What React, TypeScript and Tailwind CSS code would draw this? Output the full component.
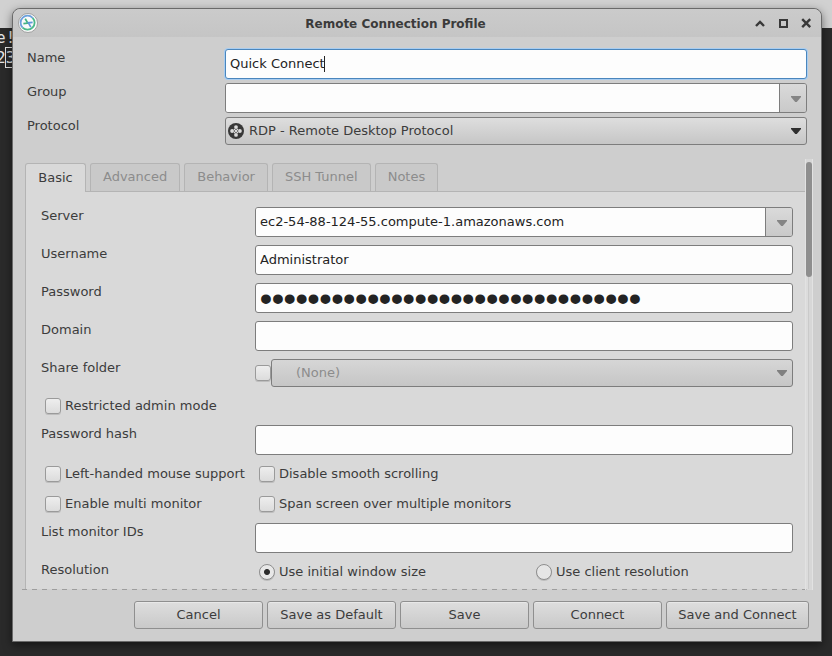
import { useId, useState, type ReactNode } from "react";

function Triangle({ className }: { className: string }) {
  return (
    <svg viewBox="0 0 10 6" className={`pointer-events-none h-1.5 w-2.5 ${className}`} fill="currentColor" aria-hidden="true">
      <path d="M0 0h10v1L5.8 6H4.2L0 1z" />
    </svg>
  );
}

function AppIcon() {
  return (
    <svg viewBox="0 0 20 20" className="size-5" fill="none" aria-hidden="true">
      <circle cx="10" cy="10" r="9.5" fill="#fafafa" stroke="#909090" strokeWidth="0.8" />
      <path d="M4.6 14.6A7 7 0 0 1 14.6 4.8" stroke="#6ba0dc" strokeWidth="1.8" />
      <path d="M14.6 4.8A7 7 0 1 1 4.6 14.6" stroke="#4bb98a" strokeWidth="1.8" />
      <path d="M7.2 5.8l2.6 4.2-4.4.6" stroke="#43b383" strokeWidth="1.7" />
      <path d="M14.6 9.4l-4.2.4 2.4 4.4" stroke="#5f97d8" strokeWidth="1.7" />
    </svg>
  );
}

function RdpIcon() {
  return (
    <svg viewBox="0 0 16 16" className="pointer-events-none absolute left-[3px] size-4" aria-hidden="true">
      <circle cx="8" cy="8" r="8" fill="#383838" />
      <g fill="#dcdcdc">
        <circle cx="8" cy="4.1" r="1.9" />
        <circle cx="8" cy="11.9" r="1.9" />
        <circle cx="4.1" cy="8" r="1.9" />
        <circle cx="11.9" cy="8" r="1.9" />
      </g>
      <path d="M6 6l4 4M10 6l-4 4" stroke="#dcdcdc" strokeWidth="1.1" />
    </svg>
  );
}

const box = "rounded-[3px] border border-[#7d7d7d]";
const entry = "h-[30px] w-full min-w-0 bg-[#fdfdfd] pl-1 pb-0.5 text-[#232323] outline-none";

function Field({ label, children }: { label: string; children: (id: string) => ReactNode }) {
  const id = useId();
  return (
    <>
      <label htmlFor={id} className="self-start leading-[18px]">{label}</label>
      {children(id)}
    </>
  );
}

function TextField({ label, value = "" }: { label: string; value?: string }) {
  return <Field label={label}>{(id) => <input id={id} type="text" defaultValue={value} className={`${entry} ${box}`} />}</Field>;
}

function ComboEntry({ label, value = "" }: { label: string; value?: string }) {
  return (
    <Field label={label}>
      {(id) => (
        <div className={`flex h-[30px] overflow-hidden ${box}`}>
          <input id={id} type="text" defaultValue={value} className="min-w-0 flex-1 bg-[#fdfdfd] pl-1 text-[#232323] outline-none" />
          <button type="button" aria-label={`${label} history`} className="flex w-[27px] items-center justify-end border-l border-[#7d7d7d] bg-linear-to-b from-[#dadada] to-[#c9c9c9] pt-0.5 pr-[5px]">
            <Triangle className="text-[#858585]" />
          </button>
        </div>
      )}
    </Field>
  );
}

function Tick({ label }: { label?: string }) {
  return (
    <input
      type="checkbox"
      aria-label={label}
      className="size-4 shrink-0 appearance-none rounded-[3px] border border-[#9a9a9a] bg-linear-to-b from-[#eeeeee] to-[#dcdcdc] shadow-[0_1px_0_#bdbdbd]"
    />
  );
}

function CheckItem({ label }: { label: string }) {
  return (
    <label className="flex h-[22px] items-center gap-1 pl-1 whitespace-nowrap">
      <Tick />
      <span className="leading-4">{label}</span>
    </label>
  );
}

function RadioItem({ label, checked }: { label: string; checked?: boolean }) {
  return (
    <label className="flex h-[22px] items-center gap-1 pl-1 whitespace-nowrap">
      <input
        type="radio"
        name="resolution"
        defaultChecked={checked}
        className="size-4 shrink-0 appearance-none rounded-full border border-[#8e8e8e] bg-[#e6e6e6] shadow-[0_1px_0_#bdbdbd] checked:bg-[radial-gradient(circle,#2d2d2d_2.5px,#e8e8e8_3.5px)]"
      />
      <span className="leading-4">{label}</span>
    </label>
  );
}

const tabs = ["Basic", "Advanced", "Behavior", "SSH Tunnel", "Notes"];

export default function App() {
  const [tab, setTab] = useState("Basic");
  const nameId = useId();
  return (
    <div className="relative min-h-screen overflow-hidden bg-[#2a2a2a] px-3 pt-2 pr-2.5 pb-3.5 font-['DejaVu_Sans',sans-serif] text-[13px] text-[#3c3c3c]">
      <div className="absolute inset-x-0 top-0 h-7 bg-[#d1d1d1]" />
      <pre aria-hidden="true" className="absolute top-7 -left-1 font-['DejaVu_Sans_Mono',monospace] text-[16px] leading-5 text-[#e4e4e4]">
        {"e!\n2"}
        <span className="outline outline-[#e4e4e4]">3</span>
      </pre>

      <main className="relative rounded-t-lg border border-[#6a6a6a] bg-[#cecece] shadow-[0_3px_10px_#00000080]">
        <header className="flex h-7 items-center rounded-t-lg bg-linear-to-b from-[#cbcbcb] to-[#c5c5c5] px-[5px]">
          <AppIcon />
          <h1 className="flex-1 pt-px text-center text-[12px] leading-7 font-bold text-[#3b3b3b]">Remote Connection Profile</h1>
          <div className="flex justify-end gap-[9px] pr-[3px] text-[#383838]">
            <button type="button" aria-label="Roll up">
              <svg viewBox="0 0 14 14" className="size-3.5" fill="none" stroke="currentColor" strokeWidth="2.4"><path d="M3 10L7 6l4 4" /></svg>
            </button>
            <button type="button" aria-label="Maximize">
              <svg viewBox="0 0 14 14" className="size-3.5" fill="none" stroke="currentColor" strokeWidth="2"><path d="M4 4h7v7H4z" /></svg>
            </button>
            <button type="button" aria-label="Close">
              <svg viewBox="0 0 14 14" className="size-3.5" fill="none" stroke="currentColor" strokeWidth="2.4"><path d="M3.2 3.2l8 8M11.2 3.2l-8 8" /></svg>
            </button>
          </div>
        </header>

        <section className="grid grid-cols-[198px_1fr] gap-y-1 px-3.5 pt-3">
          <label htmlFor={nameId} className="leading-[18px]">Name</label>
          <div className="relative">
            <input id={nameId} type="text" defaultValue="Quick Connect" className={`${entry} block rounded-[3px] border border-[#4a86bd] caret-transparent shadow-[0_0_0_1px_#a9cdf0]`} />
            <span className="absolute top-[7px] left-[99px] h-4 w-px bg-[#232323]" />
          </div>
          <ComboEntry label="Group" />
          <Field label="Protocol">
            {(id) => (
              <div className="relative flex items-center">
                <select id={id} className={`h-7 w-full appearance-none bg-linear-to-b from-[#dedede] to-[#c6c6c6] pl-[23px] text-[#3c3c3c] ${box}`}>
                  <option>RDP - Remote Desktop Protocol</option>
                </select>
                <RdpIcon />
                <Triangle className="absolute right-1.5 text-[#2f2f2f]" />
              </div>
            )}
          </Field>
        </section>

        <section className="relative mt-3.5 ml-[9px] mr-2 pt-1 pr-1 pl-[3px]">
          <div role="tablist" className="flex gap-1">
            {tabs.map((t) => (
              <button
                key={t}
                type="button"
                role="tab"
                aria-selected={t === tab}
                onClick={() => setTab(t)}
                className={
                  t === tab
                    ? "relative z-10 -mb-px h-[29px] min-w-[61px] rounded-t-[3px] border border-b-0 border-[#b4b4b4] bg-[#d9d9d9] px-3 whitespace-nowrap"
                    : "h-7 rounded-t-[3px] border border-b-0 border-[#b4b4b4] bg-[#c9c9c9] px-3 pb-0.5 whitespace-nowrap text-[#8c8c8c]"
                }
              >
                {t}
              </button>
            ))}
          </div>
          <div role="tabpanel" className="grid grid-cols-[214px_1fr] gap-y-2 border border-b-0 border-[#b4b4b4] bg-[#d9d9d9] px-[15px] pt-[15px] pb-1.5">
            <ComboEntry label="Server" value="ec2-54-88-124-55.compute-1.amazonaws.com" />
            <TextField label="Username" value="Administrator" />
            <Field label="Password">
              {(id) => (
                <input
                  id={id}
                  type="password"
                  defaultValue="correct-horse-battery-staple-042"
                  className={`h-[30px] w-full bg-[#fdfdfd] pl-1 font-['Liberation_Sans',sans-serif] text-[34px] leading-7 font-bold text-[#232323] outline-none ${box}`}
                />
              )}
            </Field>
            <TextField label="Domain" />
            <Field label="Share folder">
              {(id) => (
                <div className="flex items-center">
                  <Tick label="Enable share folder" />
                  <div className="relative flex flex-1 items-center">
                    <select id={id} disabled className={`h-7 w-full appearance-none bg-linear-to-b from-[#d6d6d6] to-[#c6c6c6] pl-6 text-[#8c8c8c] opacity-100 ${box}`}>
                      <option>(None)</option>
                    </select>
                    <Triangle className="absolute right-1.5 text-[#808080]" />
                  </div>
                </div>
              )}
            </Field>
            <div className="col-span-2"><CheckItem label="Restricted admin mode" /></div>
            <TextField label="Password hash" />
            <CheckItem label="Left-handed mouse support" />
            <CheckItem label="Disable smooth scrolling" />
            <CheckItem label="Enable multi monitor" />
            <CheckItem label="Span screen over multiple monitors" />
            <TextField label="List monitor IDs" />
            <span className="leading-[18px]">Resolution</span>
            <div role="radiogroup" aria-label="Resolution" className="grid grid-cols-2 gap-x-4">
              <RadioItem label="Use initial window size" checked />
              <RadioItem label="Use client resolution" />
            </div>
          </div>
          <div className="-mr-1 -ml-[3px] h-px bg-[repeating-linear-gradient(90deg,#9e9e9e_0_5px,#d0d0d0_5px_10px)]" />
          <div className="absolute inset-y-0 right-0 w-2 border-x border-[#e2e2e2] bg-[#e0e0e080] pt-[3px]">
            <div className="h-[115px] rounded-full bg-[#8e8e8e]" />
          </div>
        </section>

        <footer className="grid grid-cols-[repeat(4,129px)_143px] justify-end gap-1 px-3 pt-[11px] pb-3">
          {["Cancel", "Save as Default", "Save", "Connect", "Save and Connect"].map((b) => (
            <button key={b} type="button" className="h-7 rounded-[3px] border border-[#8f8f8f] bg-linear-to-b from-[#dedede] to-[#c9c9c9] whitespace-nowrap shadow-[inset_0_1px_0_#e8e8e8]">
              {b}
            </button>
          ))}
        </footer>
      </main>
    </div>
  );
}
